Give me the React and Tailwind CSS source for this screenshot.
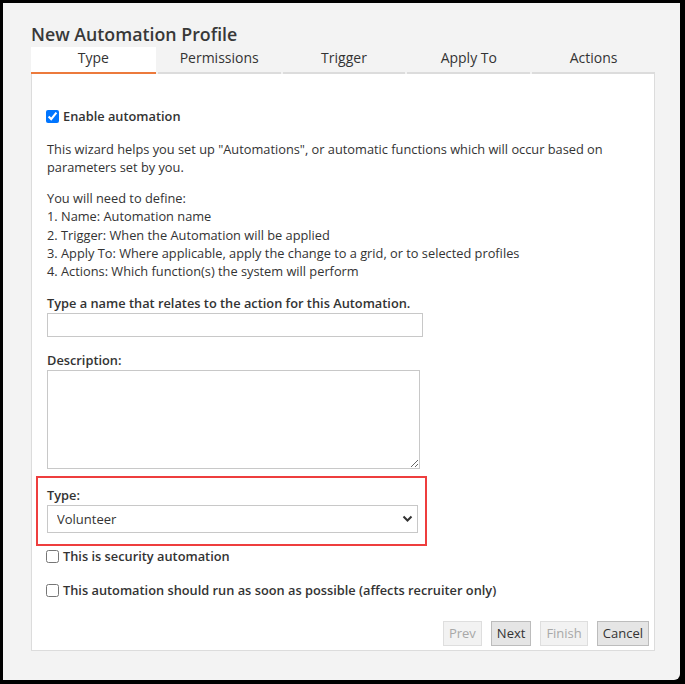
import { useState } from "react";

const tabs = ["Type", "Permissions", "Trigger", "Apply To", "Actions"];

const steps = [
  "1. Name: Automation name",
  "2. Trigger: When the Automation will be applied",
  "3. Apply To: Where applicable, apply the change to a grid, or to selected profiles",
  "4. Actions: Which function(s) the system will perform",
];

const Button = ({ children, disabled }) => (
  <button
    disabled={disabled}
    className={`h-[25px] px-[5px] border text-[13px] leading-none ${
      disabled
        ? "bg-[#f2f2f2] border-[#dedede] text-[#a8a8a8]"
        : "bg-[#e5e5e5] border-[#bcbcbc] text-[#333]"
    }`}
  >
    {children}
  </button>
);

const App = () => {
  const [enabled, setEnabled] = useState(true);
  const [security, setSecurity] = useState(false);
  const [asap, setAsap] = useState(false);
  const [type, setType] = useState("Volunteer");

  return (
    <div
      className="w-[685px] h-[684px] bg-black border-t-[3px] border-l-[3px] border-r-[5px] border-b-[4px] border-black box-border"
      style={{ fontFamily: "'Open Sans', 'Noto Sans', sans-serif" }}
    >
      <div className="h-full bg-[#f3f3f3] rounded-br-[6px] pl-[28px] pt-[19px] text-[#333]">
        <h1 className="text-[17.8px] leading-[24px] font-semibold text-[#383838]">New Automation Profile</h1>
        <div className="w-[624px] grid grid-cols-5 h-[27px] mt-[1px]">
          {tabs.map((t, i) => (
            <div
              key={t}
              className={`flex items-center justify-center text-[14px] pb-[4px] ${
                i === 0
                  ? "bg-white border-b-2 border-[#ec7a3c]"
                  : "border-b-2 border-[#dcdcdc] ml-[2px]"
              }`}
            >
              {t}
            </div>
          ))}
        </div>
        <div className="w-[624px] h-[577px] bg-white border border-t-0 border-[#dcdcdc] pl-[15px] pr-[5px] pt-[33px] flex flex-col text-[12.8px] leading-[18px]">
          <label className="flex items-center gap-[4px] h-[18px] font-semibold">
            <input
              type="checkbox"
              checked={enabled}
              onChange={() => setEnabled(!enabled)}
              className="w-[13px] h-[13px] m-0 -ml-px accent-[#0075ff]"
            />
            Enable automation
          </label>
          <p className="mt-[15px] w-[580px]">
            This wizard helps you set up "Automations", or automatic functions which will occur based on parameters set by you.
          </p>
          <div className="mt-[13px] leading-[18.3px]">
            <div>You will need to define:</div>
            {steps.map((s) => (
              <div key={s}>{s}</div>
            ))}
          </div>
          <div className="mt-[14px] font-semibold">Type a name that relates to the action for this Automation.</div>
          <input className="mt-[1px] w-[376px] h-[24px] border border-[#c8c8c8] px-1 outline-none" />
          <div className="mt-[14px] font-semibold">Description:</div>
          <textarea className="mt-[1px] w-[373px] h-[99px] border border-[#c8c8c8] px-1 outline-none" />
          <div className="mt-[7px] -ml-[11px] w-[391px] h-[70px] border-2 border-[#ee3e3e] pl-[9px] pt-[8px]">
            <div className="font-semibold">Type:</div>
            <div className="relative w-[371px] h-[28px] mt-[1px]">
              <select
                value={type}
                onChange={(e) => setType(e.target.value)}
                className="appearance-none w-full h-full border border-[#c8c8c8] bg-white pl-[9px] text-[13px] text-[#333] outline-none"
              >
                <option>Volunteer</option>
                <option>Staff</option>
              </select>
              <svg className="absolute right-[5px] top-[10px] pointer-events-none" width="11" height="8" viewBox="0 0 11 8">
                <path d="M1.5 1.5 L5.5 5.5 L9.5 1.5" fill="none" stroke="#333" strokeWidth="2" />
              </svg>
            </div>
          </div>
          <label className="mt-[1px] flex items-center gap-[4px] h-[18px] font-semibold">
            <input
              type="checkbox"
              checked={security}
              onChange={() => setSecurity(!security)}
              className="w-[13px] h-[13px] m-0 -ml-px"
            />
            This is security automation
          </label>
          <label className="mt-[16px] flex items-center gap-[4px] h-[18px] font-semibold">
            <input
              type="checkbox"
              checked={asap}
              onChange={() => setAsap(!asap)}
              className="w-[13px] h-[13px] m-0 -ml-px"
            />
            This automation should run as soon as possible (affects recruiter only)
          </label>
          <div className="mt-auto mb-[4px] flex justify-end gap-[9px]">
            <Button disabled>Prev</Button>
            <Button>Next</Button>
            <Button disabled>Finish</Button>
            <Button>Cancel</Button>
          </div>
        </div>
      </div>
    </div>
  );
};

export default App;
